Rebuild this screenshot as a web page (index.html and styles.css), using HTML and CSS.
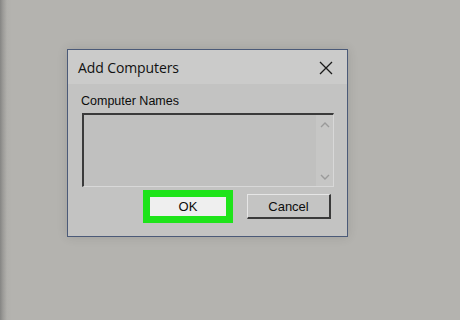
FILE: index.html
```html
<!DOCTYPE html>
<html lang="en">

<head>
    <meta charset="UTF-8">
    <meta name="viewport" content="width=device-width, initial-scale=1.0">
    <title>Add Computers</title>
    <link rel="stylesheet" href="styles.css">
</head>

<body>

    <div class="dialog">
        <div class="title-bar">
            <span class="title">Add Computers</span>
            <svg class="close" width="14" height="14" viewBox="0 0 14 14">
                <path d="M1 1 L13 13 M13 1 L1 13" stroke="#1a1a1a" stroke-width="1.3" fill="none" />
            </svg>
        </div>

        <div class="content">
            <label for="names">Computer Names</label>
            <div class="names-box">
                <div class="names-area" id="names"></div>
                <div class="scrollbar">
                    <svg width="10" height="6" viewBox="0 0 10 6">
                        <path d="M1 5 L5 1 L9 5" stroke="#9a9a9a" stroke-width="1.4" fill="none" />
                    </svg>
                    <svg width="10" height="6" viewBox="0 0 10 6">
                        <path d="M1 1 L5 5 L9 1" stroke="#9a9a9a" stroke-width="1.4" fill="none" />
                    </svg>
                </div>
            </div>

            <div class="buttons">
                <div class="highlight">
                    <button class="btn btn-ok">OK</button>
                </div>
                <button class="btn btn-cancel">Cancel</button>
            </div>
        </div>
    </div>

</body>

</html>
```

FILE: styles.css
```css
body {
    margin: 0;
    height: 320px;
    background: linear-gradient(to right, #858583 0px, #9c9b98 3px, #b1b0ac 7px, #b4b3af 12px);
    font-family: "Liberation Sans", Arial, sans-serif;
    overflow: hidden;
}

.dialog {
    margin: 49px 0 0 67px;
    width: 279px;
    height: 186px;
    border: 1px solid #4b5a78;
    background-color: #c3c3c2;
    box-shadow: 0 0 10px rgba(0, 0, 0, 0.12);
    display: flex;
    flex-direction: column;
}

.title-bar {
    height: 34px;
    background-color: #cbcbca;
    display: flex;
    align-items: center;
    justify-content: space-between;
    padding: 0 14px 0 10px;
}

.title {
    font-family: "Open Sans", "Noto Sans", sans-serif;
    font-size: 14px;
    color: #111;
    letter-spacing: -0.1px;
}

.close {
    margin-top: 1px;
}

.content {
    padding: 10px 13px 0 14px;
    display: flex;
    flex-direction: column;
}

label {
    display: block;
    font-size: 12.5px;
    color: #0c0c0c;
    margin-left: -1px;
    height: 19px;
}

.names-box {
    height: 71px;
    display: flex;
    border-top: 2px solid #3a3a3a;
    border-left: 2px solid #3a3a3a;
    border-right: 1px solid #d8d8d8;
    border-bottom: 1px solid #d8d8d8;
    background-color: #c0c0bf;
}

.names-area {
    flex: 1;
}

.scrollbar {
    width: 17px;
    background-color: #c6c6c5;
    display: flex;
    flex-direction: column;
    justify-content: space-between;
    align-items: center;
    padding: 7px 0 6px;
}

.buttons {
    display: flex;
    align-items: center;
    margin-top: 3px;
    padding-left: 61px;
}

.highlight {
    background-color: #1ee41a;
    padding: 7px;
    width: 76px;
    height: 19px;
}

.btn {
    font-family: "Liberation Sans", Arial, sans-serif;
    font-size: 13px;
    color: #0c0c0c;
    padding: 0;
    cursor: pointer;
}

.btn-ok {
    width: 76px;
    height: 19px;
    border: none;
    background-color: #efefef;
}

.btn-cancel {
    margin-left: 14px;
    width: 84px;
    height: 25px;
    background-color: #c4c4c3;
    border-top: 1px solid #e6e6e6;
    border-left: 1px solid #e6e6e6;
    border-right: 2px solid #3a3a3a;
    border-bottom: 2px solid #3a3a3a;
}
```
